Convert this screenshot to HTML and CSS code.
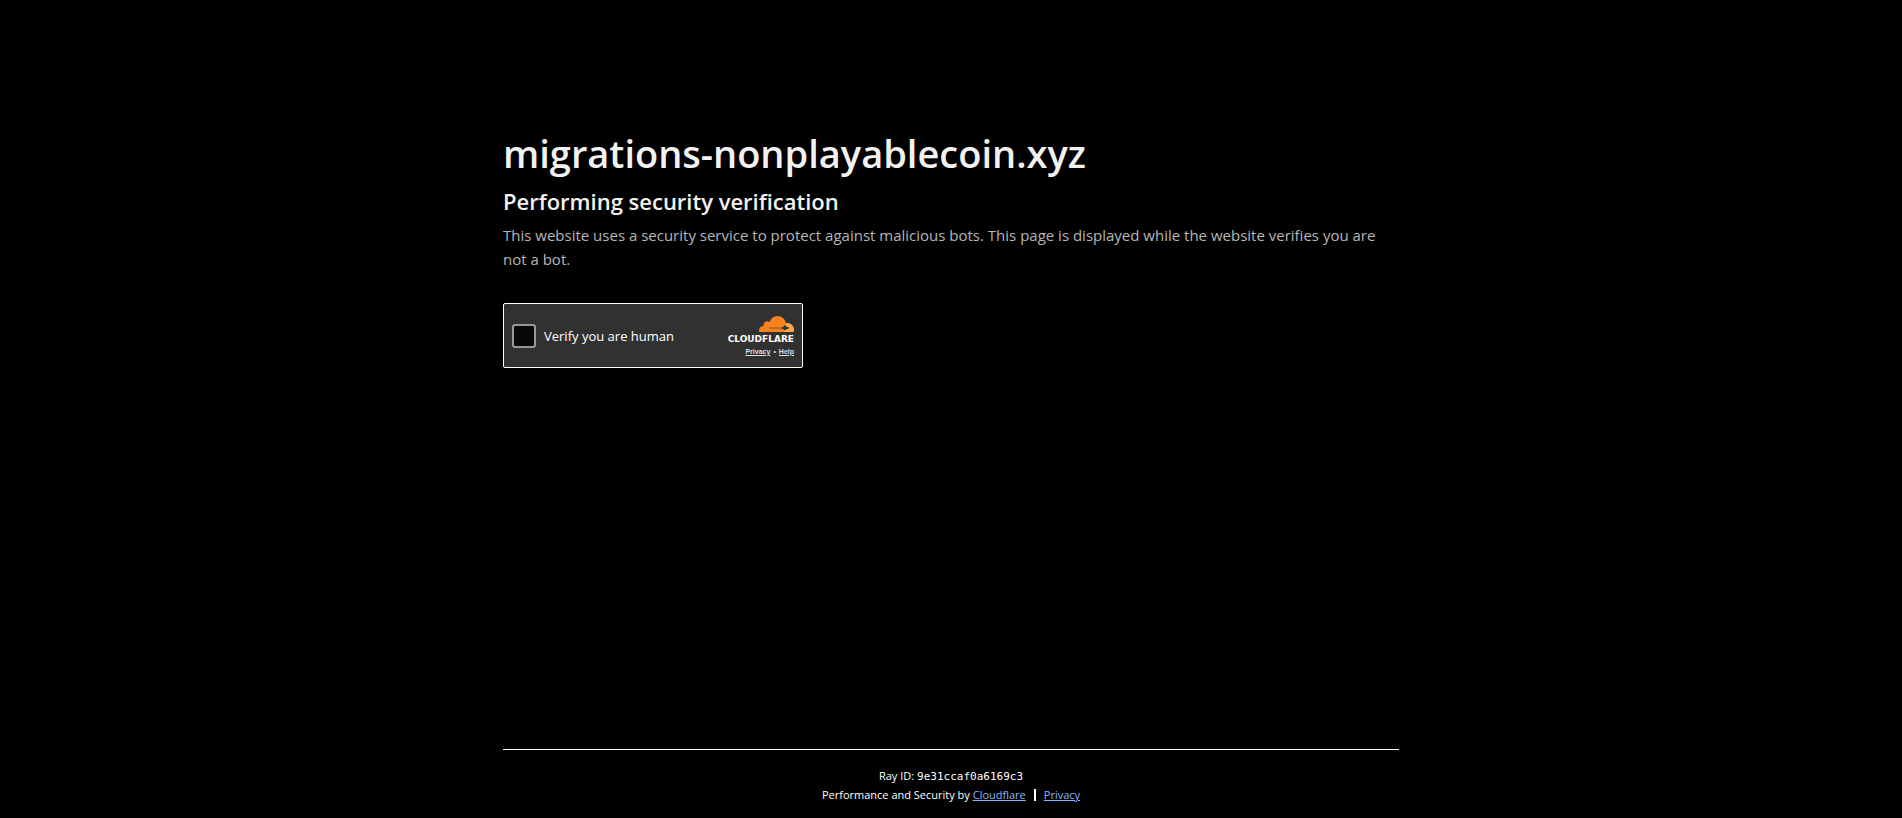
FILE: index.html
```html
<!DOCTYPE html>
<html lang="en">

<head>
    <meta charset="UTF-8">
    <meta name="viewport" content="width=device-width, initial-scale=1.0">
    <title>Just a moment...</title>
    <link rel="stylesheet" href="styles.css">
</head>

<body>
    <main class="main-content">
        <h1>migrations-nonplayablecoin.xyz</h1>
        <h2>Performing security verification</h2>
        <p>This website uses a security service to protect against malicious bots. This page is displayed while the website verifies you are not a bot.</p>

        <div class="widget">
            <label class="verify">
                <input type="checkbox" name="verify">
                <span>Verify you are human</span>
            </label>
            <div class="branding">
                <svg class="cloud" viewBox="0 0 70 32" aria-hidden="true">
                    <path fill="#fbad41" d="M49 32 L52 24 L51 15 C53 14 55 14 57 14 C64 14 70 20 70 27 C70 29 70 31 69 32 Z" />
                    <path fill="#f6821f" d="M0 32 C-1 25 3 20 9 20 C8 13 15 8 21 12 C24 4 30 0 37 0 C46 0 52 6 54 14 C55 17 55 20 53 22 L50 32 Z" />
                    <path fill="#8a4f20" d="M20 23 L46 23 L46 25 L20 25 Z" />
                    <path fill="#313131" d="M45 23 Q50 22 52 18 Q54 22 60 23 L60 25 Q54 26 52 29 Q50 26 45 25 Z" />
                </svg>
                <span class="wordmark">CLOUDFLARE</span>
                <div class="terms">
                    <a href="#privacy">Privacy</a>
                    <span>•</span>
                    <a href="#help">Help</a>
                </div>
            </div>
        </div>
    </main>

    <footer class="footer">
        <div class="footer-inner">
            <div>Ray ID: <code>9e31ccaf0a6169c3</code></div>
            <div class="footer-row">
                <span>Performance and Security by <a href="#cloudflare">Cloudflare</a></span>
                <span class="divider"></span>
                <a href="#privacy">Privacy</a>
            </div>
        </div>
    </footer>
</body>

</html>
```
FILE: styles.css
```css
* {
    box-sizing: border-box;
    margin: 0;
    padding: 0;
}

body {
    display: flex;
    flex-direction: column;
    min-height: 100vh;
    background-color: #000;
    color: #f2f2f2;
    font-family: "Segoe UI", "Open Sans", "Noto Sans", sans-serif;
}

.main-content {
    flex: 1;
    width: 100%;
    max-width: 960px;
    margin: 0 auto;
    padding: 123px 32px 0;
}

h1 {
    font-size: 38px;
    font-weight: 600;
    line-height: 60px;
}

h2 {
    font-size: 22px;
    font-weight: 600;
    line-height: 36px;
}

p {
    margin-top: 4px;
    color: #b6b6b6;
    font-size: 15px;
    line-height: 24px;
}

.widget {
    display: flex;
    justify-content: space-between;
    align-items: center;
    width: 300px;
    height: 65px;
    margin-top: 32px;
    padding: 0 8px;
    border: 1px solid #fff;
    border-radius: 2px;
    background-color: #313131;
}

.verify {
    display: flex;
    align-items: center;
    gap: 8px;
    color: #fff;
    font-size: 13px;
    cursor: pointer;
}

.verify input {
    appearance: none;
    width: 24px;
    height: 24px;
    border: 2px solid #999;
    border-radius: 3px;
    background-color: #080808;
}

.branding {
    display: flex;
    flex-direction: column;
    align-items: flex-end;
    padding-top: 2px;
}

.cloud {
    width: 35px;
    height: 16px;
}

.wordmark {
    color: #fff;
    font-family: "DejaVu Sans", sans-serif;
    font-size: 9px;
    font-weight: bold;
    line-height: 14px;
}

.terms {
    display: flex;
    gap: 3px;
    color: #ddd;
    font-family: "Liberation Sans", Arial, sans-serif;
    font-size: 7px;
    font-weight: bold;
    line-height: 12px;
}

.terms a {
    color: inherit;
}

.footer {
    width: 100%;
    max-width: 960px;
    margin: 0 auto;
    padding: 0 32px;
    color: #fff;
    font-size: 11px;
    line-height: 19px;
}

.footer-inner {
    display: flex;
    flex-direction: column;
    align-items: center;
    padding: 16px 0 14px;
    border-top: 1px solid #fff;
}

.footer code {
    font-family: Consolas, "DejaVu Sans Mono", monospace;
    font-size: 11px;
    line-height: 1;
}

.footer-row {
    display: flex;
    align-items: center;
    gap: 8px;
}

.footer a {
    color: #82b6ff;
}

.divider {
    width: 2px;
    height: 12px;
    background-color: #fff;
}
```
